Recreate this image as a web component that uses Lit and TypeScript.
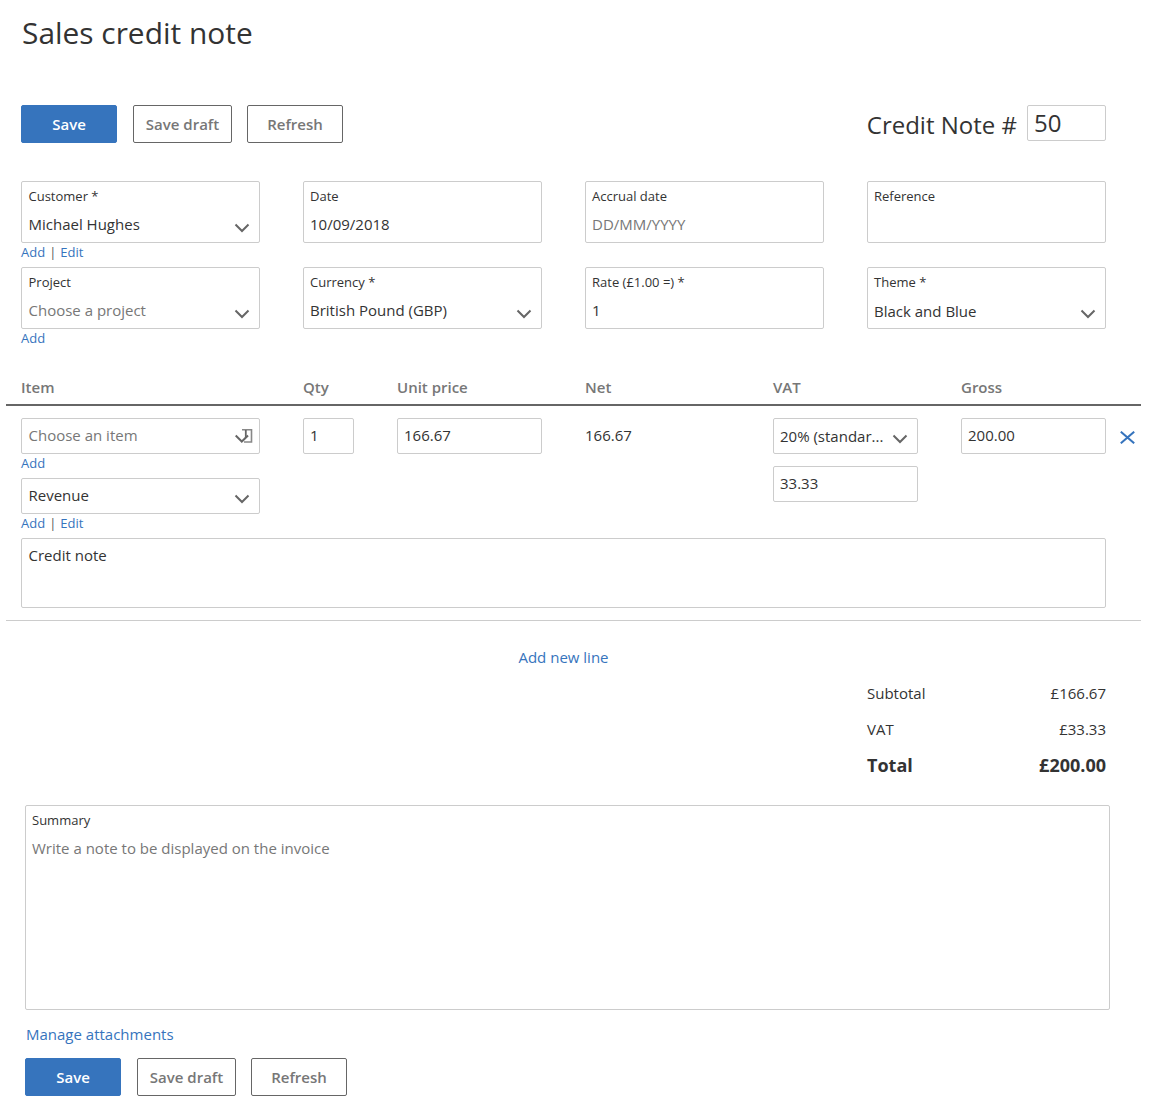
import { LitElement, html, css } from "lit";
import { customElement } from "lit/decorators.js";

const chevron = html`<svg class="chev" width="16" height="10" viewBox="0 0 16 10"><path d="M1.500 1.500 L8 8 L14.500 1.500" fill="none" stroke="#666" stroke-width="2"/></svg>`;
const itemIcon = html`<svg class="chev item" width="18" height="14" viewBox="0 0 18 14"><path d="M7 .8 H16.500 V13 H9" fill="none" stroke="#888" stroke-width="1.600"/><path d="M10.800 1 V9" stroke="#666" stroke-width="1.800"/><path d="M.7 6.500 L6.800 12.500 L13 6.500" fill="none" stroke="#666" stroke-width="2"/></svg>`;

@customElement("app-root")
export class AppRoot extends LitElement {
  static styles = css`
    :host { display: block; font-family: "Open Sans", sans-serif; color: #333; font-size: 15px; background: #fff; height: 1115px; overflow: hidden; }
    .page { padding: 0 50px 0 21px; }
    h1 { margin: 0; padding: 12px 0 0 1px; height: 105px; box-sizing: border-box; font-weight: 400; font-size: 29.900px; line-height: 41px; color: #333; }
    .actions { display: flex; align-items: flex-start; height: 76px; }
    .btn { box-sizing: border-box; height: 38px; width: 96px; border: 1px solid #666; border-radius: 2px; display: flex; align-items: center; justify-content: center; font-weight: 600; font-size: 15px; color: #777; background: #fff; margin-right: 15px; }
    .btn.primary { background: #3674bd; border-color: #3674bd; color: #fff; margin-right: 16px; }
    .btn.draft { width: 99px; }
    .note { margin-left: auto; display: flex; align-items: flex-start; }
    .note span { font-size: 24px; line-height: 33px; margin: 3px 10px 0 0; }
    .note .num { box-sizing: border-box; width: 79px; height: 36px; border: 1px solid #ccc; border-radius: 2px; font-size: 24px; line-height: 33px; padding: 0 6px; color: #333; }
    .grid { display: grid; grid-template-columns: repeat(4, 239px); column-gap: 43px; }
    .cell { height: 86px; }
    .box { position: relative; box-sizing: border-box; border: 1px solid #ccc; border-radius: 2px; background: #fff; }
    .field { height: 62px; padding: 5px 6px 0 6px; }
    .first { padding-left: 6.500px; }
    .lab { font-size: 13px; line-height: 18px; display: block; }
    .val { font-size: 15px; line-height: 20px; min-height: 20px; display: block; margin-top: 9px; color: #333; white-space: nowrap; }
    .val.nudge { margin-top: 10px; }
    .val.ph, .ph { color: #777; }
    .chev { position: absolute; right: 9px; bottom: 9px; }
    .chev.item { right: 6px; bottom: auto; top: 10px; }
    .links { font-size: 13px; line-height: 18px; color: #3674bd; height: 18px; display: flex; }
    .links i { font-style: normal; color: #555; margin: 0 4px; }
    .thead { display: grid; grid-template-columns: 282px 94px 188px 188px 188px 1fr; margin: 0 -35px 0 -15px; padding: 24px 0 7px 15px; border-bottom: 2px solid #666; font-weight: 600; color: #777; font-size: 15px; line-height: 20px; }
    .line { position: relative; margin: 0 -35px 0 -15px; padding: 12px 35px 12px 15px; border-bottom: 1px solid #ccc; }
    .row { display: grid; grid-template-columns: 239px 43px 51px 43px 145px 43px 145px 43px 145px 43px 145px; height: 120px; }
    .c-item { grid-column: 1; }
    .c-qty { grid-column: 3; }
    .c-price { grid-column: 5; }
    .c-net { grid-column: 7; line-height: 34px; font-size: 15px; }
    .c-vat { grid-column: 9; }
    .c-gross { grid-column: 11; }
    .inp { height: 36px; padding: 0 6px; line-height: 33px; font-size: 15px; white-space: nowrap; }
    .inp.first { padding-left: 6.500px; }
    .inp.tall { line-height: 34px; }
    .revenue { margin-top: 6px; }
    .stack { margin-top: 12px; }
    .desc { height: 70px; padding: 6px 6px 6px 6.500px; font-size: 15px; line-height: 20px; }
    .x { position: absolute; left: 1114px; top: 25px; }
    .add-line { text-align: center; color: #3674bd; font-size: 15px; line-height: 20px; margin-top: 26px; height: 36px; }
    .totals { margin-left: 846px; width: 239px; font-size: 15px; }
    .totals div { display: flex; justify-content: space-between; height: 36px; line-height: 20px; }
    .totals .total { font-weight: 700; font-size: 18px; line-height: 25px; margin-top: -2px; height: 39px; }
    .summary { margin: 13px 0 0 4px; width: 1085px; height: 205px; padding: 5px 6px; }
    .manage { margin: 14px 0 0 5px; color: #3674bd; font-size: 15px; line-height: 20px; height: 34px; }
    .actions.bottom { margin-left: 4px; height: 40px; }
  `;

  private field(label: string, value: string, opts: { ph?: boolean; sel?: boolean; links?: string; first?: boolean; nudge?: boolean } = {}) {
    return html`<div class="cell">
      <div class="box field ${opts.first ? "first" : ""}">
        <span class="lab">${label}</span>
        <span class="val ${opts.ph ? "ph" : ""} ${opts.nudge ? "nudge" : ""}">${value}</span>
        ${opts.sel ? chevron : ""}
      </div>
      ${this.links(opts.links)}
    </div>`;
  }

  private links(kind?: string) {
    if (!kind) return "";
    return html`<div class="links"><span>Add</span>${kind === "both" ? html`<i>|</i><span>Edit</span>` : ""}</div>`;
  }

  private buttons() {
    return html`<div class="btn primary">Save</div><div class="btn draft">Save draft</div><div class="btn">Refresh</div>`;
  }

  render() {
    return html`<div class="page">
      <h1>Sales credit note</h1>
      <div class="actions">
        ${this.buttons()}
        <div class="note"><span>Credit Note #</span><div class="num">50</div></div>
      </div>
      <div class="grid">
        ${this.field("Customer *", "Michael Hughes", { sel: true, links: "both", first: true })}
        ${this.field("Date", "10/09/2018")}
        ${this.field("Accrual date", "DD/MM/YYYY", { ph: true })}
        ${this.field("Reference", "")}
        ${this.field("Project", "Choose a project", { ph: true, sel: true, links: "add", first: true })}
        ${this.field("Currency *", "British Pound (GBP)", { sel: true })}
        ${this.field("Rate (£1.00 =) *", "1")}
        ${this.field("Theme *", "Black and Blue", { sel: true, nudge: true })}
      </div>
      <div class="thead">
        <div>Item</div><div>Qty</div><div>Unit price</div><div>Net</div><div>VAT</div><div>Gross</div>
      </div>
      <div class="line">
        <div class="row">
          <div class="c-item">
            <div class="box inp first ph">Choose an item${itemIcon}</div>
            ${this.links("add")}
            <div class="box inp first revenue">Revenue${chevron}</div>
            ${this.links("both")}
          </div>
          <div class="c-qty"><div class="box inp">1</div></div>
          <div class="c-price"><div class="box inp">166.67</div></div>
          <div class="c-net">166.67</div>
          <div class="c-vat">
            <div class="box inp tall">20% (standar...${chevron}</div>
            <div class="box inp stack">33.33</div>
          </div>
          <div class="c-gross"><div class="box inp">200.00</div></div>
        </div>
        <div class="box desc">Credit note</div>
        <svg class="x" width="15" height="13" viewBox="0 0 15 13"><path d="M.8 .7 L14.200 12.300 M14.200 .7 L.8 12.300" stroke="#3674bd" stroke-width="2" fill="none"/></svg>
      </div>
      <div class="add-line">Add new line</div>
      <div class="totals">
        <div><span>Subtotal</span><span>£166.67</span></div>
        <div><span>VAT</span><span>£33.33</span></div>
        <div class="total"><span>Total</span><span>£200.00</span></div>
      </div>
      <div class="box summary">
        <span class="lab">Summary</span>
        <span class="val ph">Write a note to be displayed on the invoice</span>
      </div>
      <div class="manage">Manage attachments</div>
      <div class="actions bottom">${this.buttons()}</div>
    </div>`;
  }
}
